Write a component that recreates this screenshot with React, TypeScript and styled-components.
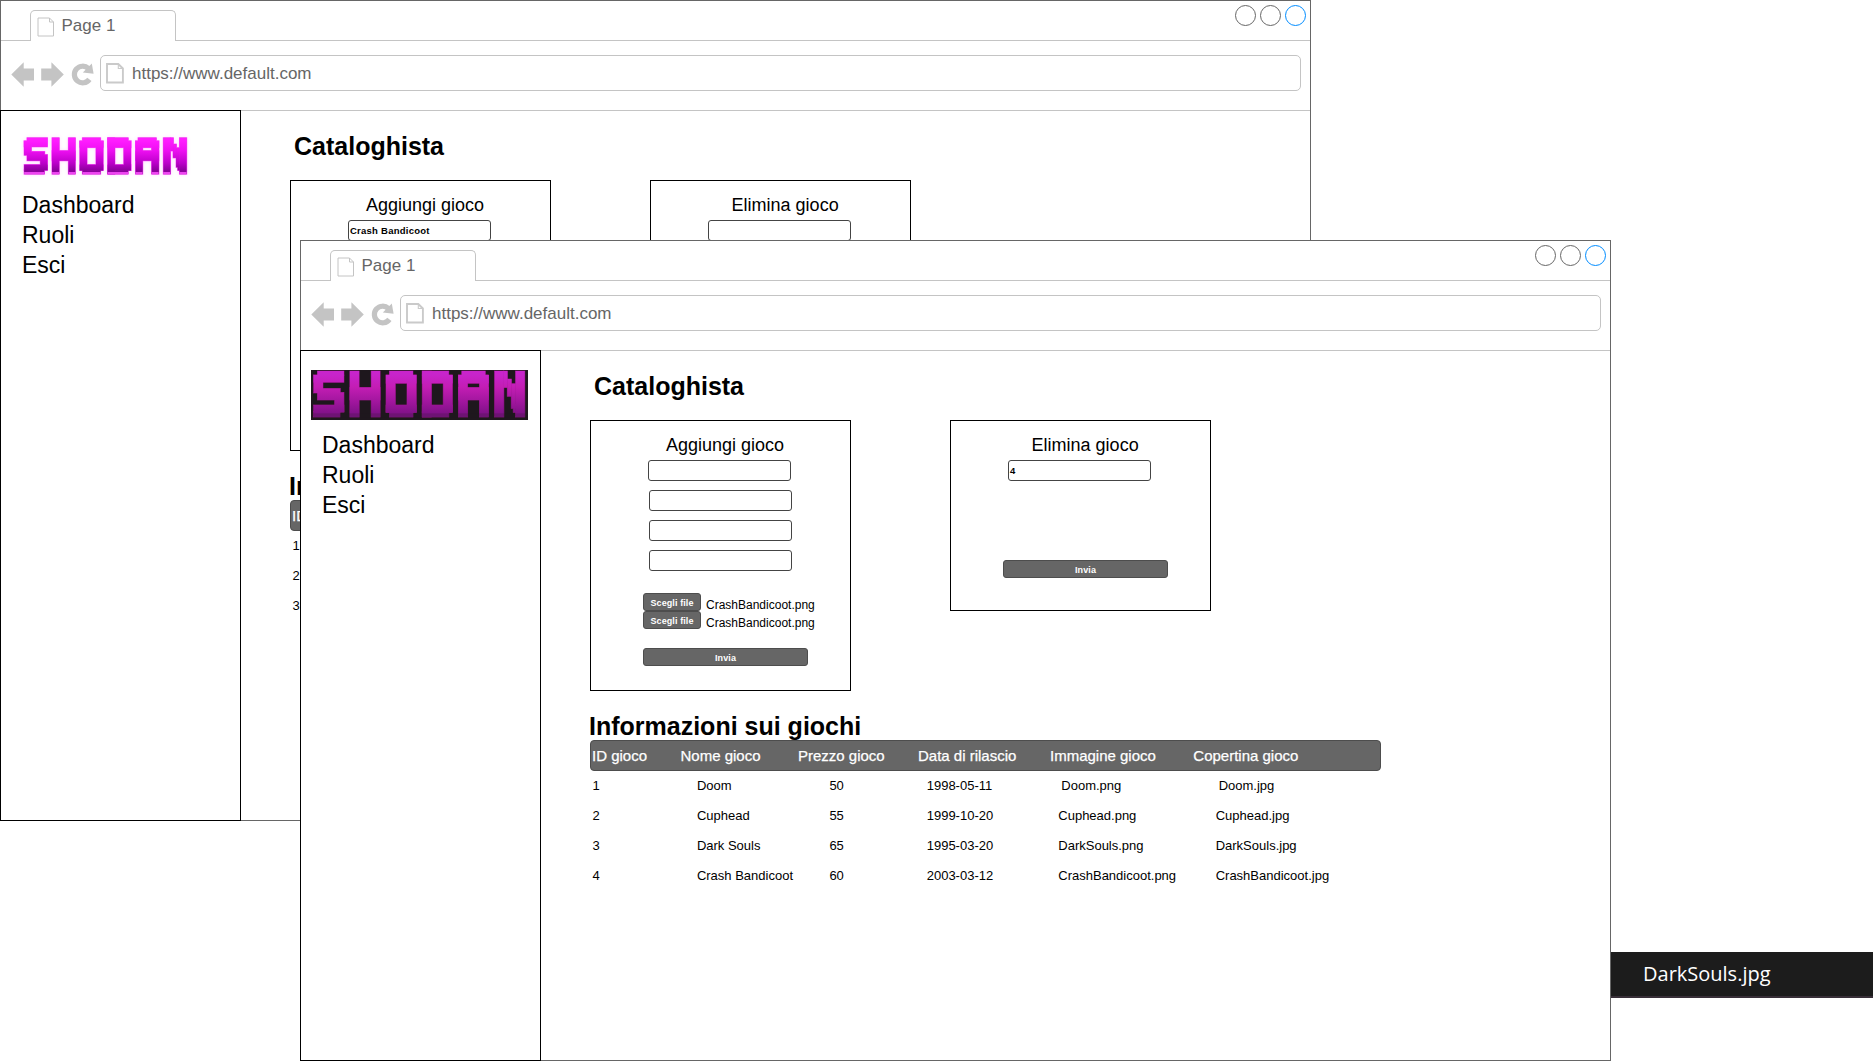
import React from "react";
import styled, { createGlobalStyle } from "styled-components";

const GlobalStyle = createGlobalStyle`
  * { box-sizing: border-box; }
  body {
    margin: 0;
    background: #fff;
    color: #000;
    font-family: "Liberation Sans", Arial, sans-serif;
    overflow: hidden;
  }
`;

const Desktop = styled.div`
  position: relative;
  width: 1873px;
  height: 1061px;
  overflow: hidden;
`;

const WindowFrame = styled.section<{ $x: number; $y: number }>`
  position: absolute;
  left: ${(p) => p.$x}px;
  top: ${(p) => p.$y}px;
  width: 1311px;
  height: 821px;
  display: flex;
  flex-direction: column;
  background: #fff;
  border: 1px solid #666;
`;

const TabBar = styled.div`
  display: flex;
  justify-content: space-between;
  height: 40px;
  padding: 0 4px 0 29px;
  border-bottom: 1px solid #c4c4c4;
`;

const Tab = styled.div`
  display: flex;
  gap: 7px;
  width: 146px;
  height: 31px;
  margin-top: 9px;
  padding: 6px 0 0 6px;
  background: #fff;
  border: 1px solid #c4c4c4;
  border-bottom: 0;
  border-radius: 5px 5px 0 0;
  color: #666;
  font-size: 17px;
  line-height: 18px;
  svg { margin: -0.5px 0 0 -0.5px; }
`;

const WindowDots = styled.div`
  display: flex;
  gap: 4px;
  padding-top: 4px;
`;

const Dot = styled.span<{ $color: string }>`
  width: 21px;
  height: 21px;
  border: 1px solid ${(p) => p.$color};
  border-radius: 50%;
`;

const Toolbar = styled.div`
  display: flex;
  height: 70px;
  padding: 14px 0 0 10px;
  border-bottom: 1px solid #c4c4c4;
`;

const NavIcons = styled.div`
  display: flex;
  gap: 6px;
  width: 89px;
  padding-top: 7px;
`;

const AddressBar = styled.div`
  display: flex;
  align-items: center;
  gap: 8px;
  width: 1201px;
  height: 36px;
  padding-left: 5px;
  border: 1px solid #c4c4c4;
  border-radius: 5px;
  color: #666;
  font-size: 17px;
`;

const Address = styled.span`
  padding-top: 2px;
`;

const Body = styled.div`
  display: flex;
  flex: 1;
`;

const Sidebar = styled.nav`
  width: 241px;
  margin: -1px 0 -1px -1px;
  border: 1px solid #000;
`;

const LogoSlot = styled.div<{ $dark: boolean }>`
  height: 79px;
  padding: ${(p) => (p.$dark ? "19px 0 0 10px" : "20px 0 0 16px")};
  svg { display: block; }
`;

const MenuItem = styled.a`
  display: block;
  padding-left: 21px;
  font-size: 23px;
  line-height: 30px;
`;

const Main = styled.main`
  width: 1060px;
  padding: 20px 0 0 49px;
`;

const PageTitle = styled.h1`
  margin: 0 0 19px 4px;
  font-size: 25px;
  line-height: 30px;
`;

const Panels = styled.div`
  display: flex;
  align-items: flex-start;
  gap: 99px;
`;

const Panel = styled.form<{ $height: number }>`
  width: 261px;
  height: ${(p) => p.$height}px;
  padding-top: 12px;
  border: 1px solid #000;
`;

const PanelTitle = styled.h2<{ $indent: number }>`
  margin: 0 0 3px;
  padding-left: ${(p) => p.$indent}px;
  font-size: 18px;
  font-weight: 400;
  line-height: 24px;
`;

const Fields = styled.div`
  display: flex;
  flex-direction: column;
  gap: 9px;
  padding-left: 57px;
`;

const Field = styled.div<{ $shift?: boolean }>`
  width: 143px;
  height: 21px;
  margin-left: ${(p) => (p.$shift ? 1 : 0)}px;
  padding-left: 1px;
  border: 1px solid #444;
  border-radius: 3px;
  font-size: 9.5px;
  font-weight: 700;
  letter-spacing: 0.25px;
  line-height: 20px;
`;

const Files = styled.div`
  padding: 22px 0 0 52px;
`;

const FileRow = styled.div`
  display: flex;
  gap: 5px;
  height: 18px;
  font-size: 12px;
  line-height: 25px;
`;

const Button = styled.div<{ $width: number }>`
  width: ${(p) => p.$width}px;
  height: 18px;
  background: #666;
  border: 1px solid #4d4d4d;
  border-radius: 3px;
  color: #fff;
  font-size: 9px;
  font-weight: 700;
  letter-spacing: 0.1px;
  line-height: 18px;
  text-align: center;
`;

const Submit = styled.div<{ $top: number }>`
  padding: ${(p) => p.$top}px 0 0 52px;
`;

const TableTitle = styled.h1<{ $top: number }>`
  margin: ${(p) => p.$top}px 0 0 -1px;
  font-size: 25px;
  line-height: 28px;
`;

const TableHead = styled.div`
  display: grid;
  grid-template-columns: 88.5px 117.5px 120px 132px 143.3px 1fr;
  width: 791px;
  height: 31px;
  padding-left: 1px;
  background: #666;
  border: 1px solid #4d4d4d;
  border-radius: 4px;
  color: #fff;
  font-size: 15px;
  line-height: 30px;
  white-space: nowrap;
  -webkit-text-stroke: 0.25px #fff;
`;

const TableRow = styled.div`
  display: grid;
  grid-template-columns: 104.5px 132.5px 97.3px 131.6px 157.4px 1fr;
  width: 791px;
  padding-left: 2.4px;
  font-size: 13px;
  line-height: 30px;
  white-space: nowrap;
`;

const Cell = styled.span<{ $indent?: boolean }>`
  padding-left: ${(p) => (p.$indent ? 3 : 0)}px;
`;

const Strip = styled.div`
  position: absolute;
  left: 1611px;
  top: 952px;
  width: 262px;
  height: 46px;
  padding-left: 32px;
  background: #1c1c1c;
  border-bottom: 2px solid #382f38;
  color: #fff;
  font-family: "Open Sans", sans-serif;
  font-size: 20px;
  line-height: 44px;
`;

const PageIcon = ({ bold }: { bold?: boolean }) => (
  <svg width="18" height="21" viewBox="0 0 18 21" fill="none"
    stroke={bold ? "#cacaca" : "#c4c4c4"} strokeWidth={bold ? 1.9 : 1}>
    <path d={bold ? "M1 1H12.3L16.9 5.5V19.5H1Z" : "M1 1H12.5L16.5 5V19H1Z"} />
    <path d={bold ? "M12.3 .9V5.5H16.9" : "M12.5 1V5H16.5"} strokeWidth={bold ? 1.1 : 1} />
  </svg>
);

const BackIcon = () => (
  <svg width="24" height="26" viewBox="0 0 24 26" fill="#c4c4c4">
    <path d="M.3 12.5L12.7 .3V6.6H23V18.4H12.7V24.8Z" />
  </svg>
);

const ForwardIcon = () => (
  <svg width="24" height="26" viewBox="0 0 24 26" fill="#c4c4c4">
    <path d="M22.8 12.5L10.4 .3V6.6H.2V18.4H10.4V24.8Z" />
  </svg>
);

const ReloadIcon = () => (
  <svg width="24" height="26" viewBox="0 0 24 26">
    <path d="M17.4 6.5A8.3 8.3 0 1 0 18.4 17.4" fill="none" stroke="#c4c4c4" strokeWidth="5.2" />
    <path d="M20.8 1.4L22.6 11.8L11.8 10.4Z" fill="#c4c4c4" />
  </svg>
);

type Block = [number, number, number, number];

// Pixel blocks of the logo, one list per symbol, each on a 91 x 138 field.
const logoBlocks: Block[][] = [
  [[11, 0, 80, 13], [0, 12, 91, 22], [0, 12, 28, 54], [11, 52, 69, 35], [63, 64, 28, 59], [0, 102, 91, 21], [0, 122, 79, 16]],
  [[0, 0, 28, 138], [64, 0, 27, 138], [0, 49, 91, 38]],
  [[10, 0, 71, 13], [0, 12, 28, 112], [63, 12, 28, 112], [0, 12, 91, 25], [0, 102, 91, 22], [10, 123, 71, 15]],
  [[0, 0, 80, 13], [0, 0, 28, 138], [63, 12, 28, 112], [0, 12, 91, 25], [0, 102, 91, 22], [0, 123, 80, 15]],
  [[10, 0, 71, 13], [0, 12, 28, 126], [63, 12, 28, 126], [0, 12, 91, 25], [0, 49, 91, 38]],
  [[0, 0, 28, 138], [63, 0, 28, 138], [27, 0, 12, 50], [38, 24, 13, 52], [50, 38, 14, 74], [56, 100, 8, 24]],
];

const Logo = ({ dark }: { dark: boolean }) => {
  const id = dark ? "logo-dark" : "logo-light";
  const blocks = logoBlocks.flatMap((list, i) =>
    list.map(([x, y, w, h], j) => (
      <rect key={`${i}-${j}`} x={x + i * 108.7} y={y} width={w} height={h} />
    ))
  );
  const stops = dark
    ? ["#c824cb", "#c31db4", "#9d159b", "#83128a"]
    : ["#ff1cff", "#ee0ff2", "#bb00c9", "#8c009c"];
  return (
    <svg
      role="img"
      aria-label="Shodan"
      width={dark ? 217 : 179}
      height={dark ? 50 : 46}
      viewBox={dark ? "-8 -3 652 150" : "-28 -26 699 175"}
      preserveAspectRatio="none"
    >
      <defs>
        <linearGradient id={id} gradientUnits="userSpaceOnUse" x1="0" y1="0" x2="0" y2="138">
          <stop offset="0.08" stopColor={stops[0]} />
          <stop offset="0.35" stopColor={stops[1]} />
          <stop offset="0.7" stopColor={stops[2]} />
          <stop offset="0.9" stopColor={stops[3]} />
        </linearGradient>
        <filter id={`${id}-glow`} x="-10%" y="-30%" width="120%" height="160%">
          <feGaussianBlur stdDeviation="9" />
        </filter>
      </defs>
      {dark && <rect x="-8" y="-3" width="652" height="150" fill="#1e171d" />}
      {!dark && <g fill="#ff60ff" opacity="0.3" filter={`url(#${id}-glow)`}>{blocks}</g>}
      <g stroke={dark ? "#a0168c" : "#ff4cff"} strokeWidth={dark ? 2 : 4}>{blocks}</g>
      <g fill={`url(#${id})`}>{blocks}</g>
      <rect
        x="0" y="127" width="636" height="12"
        fill={dark ? "#1e171d" : "#ff70ff"}
        opacity={dark ? 0.2 : 0}
      />
      {!dark && (
        <g fill="none" stroke="#ff50ff" strokeWidth="8" opacity="0.85">
          {[[0, 79], [109, 27], [174, 26], [228, 70], [326, 80], [435, 27], [498, 27], [543, 27], [606, 28]].map(
            ([x, w]) => <path key={x} d={`M${x} 134h${w}`} />
          )}
        </g>
      )}
    </svg>
  );
};

interface Game {
  id: string;
  name: string;
  price: string;
  date: string;
  image: string;
  cover: string;
  indent?: boolean;
}

const games: Game[] = [
  { id: "1", name: "Doom", price: "50", date: "1998-05-11", image: "Doom.png", cover: "Doom.jpg", indent: true },
  { id: "2", name: "Cuphead", price: "55", date: "1999-10-20", image: "Cuphead.png", cover: "Cuphead.jpg" },
  { id: "3", name: "Dark Souls", price: "65", date: "1995-03-20", image: "DarkSouls.png", cover: "DarkSouls.jpg" },
  { id: "4", name: "Crash Bandicoot", price: "60", date: "2003-03-12", image: "CrashBandicoot.png", cover: "CrashBandicoot.jpg" },
];

const headings = ["ID gioco", "Nome gioco", "Prezzo gioco", "Data di rilascio", "Immagine gioco", "Copertina gioco"];

interface BrowserProps {
  x: number;
  y: number;
  darkLogo: boolean;
  newGame: string;
  removeId: string;
  rows: Game[];
}

const Browser = ({ x, y, darkLogo, newGame, removeId, rows }: BrowserProps) => (
  <WindowFrame $x={x} $y={y}>
    <TabBar>
      <Tab><PageIcon />Page 1</Tab>
      <WindowDots>
        <Dot $color="#666" />
        <Dot $color="#666" />
        <Dot $color="#008cff" />
      </WindowDots>
    </TabBar>
    <Toolbar>
      <NavIcons><BackIcon /><ForwardIcon /><ReloadIcon /></NavIcons>
      <AddressBar><PageIcon bold /><Address>https://www.default.com</Address></AddressBar>
    </Toolbar>
    <Body>
      <Sidebar>
        <LogoSlot $dark={darkLogo}><Logo dark={darkLogo} /></LogoSlot>
        <MenuItem>Dashboard</MenuItem>
        <MenuItem>Ruoli</MenuItem>
        <MenuItem>Esci</MenuItem>
      </Sidebar>
      <Main>
        <PageTitle>Cataloghista</PageTitle>
        <Panels>
          <Panel $height={271}>
            <PanelTitle $indent={75}>Aggiungi gioco</PanelTitle>
            <Fields>
              <Field>{newGame}</Field>
              <Field $shift />
              <Field $shift />
              <Field $shift />
            </Fields>
            <Files>
              <FileRow><Button $width={58}>Scegli file</Button>CrashBandicoot.png</FileRow>
              <FileRow><Button $width={58}>Scegli file</Button>CrashBandicoot.png</FileRow>
            </Files>
            <Submit $top={19}><Button $width={165}>Invia</Button></Submit>
          </Panel>
          <Panel $height={191}>
            <PanelTitle $indent={80.6}>Elimina gioco</PanelTitle>
            <Fields><Field>{removeId}</Field></Fields>
            <Submit $top={79}><Button $width={165}>Invia</Button></Submit>
          </Panel>
        </Panels>
        <TableTitle $top={21}>Informazioni sui giochi</TableTitle>
        <TableHead>{headings.map((h) => <span key={h}>{h}</span>)}</TableHead>
        {rows.map((g) => (
          <TableRow key={g.id}>
            <Cell>{g.id}</Cell>
            <Cell>{g.name}</Cell>
            <Cell>{g.price}</Cell>
            <Cell>{g.date}</Cell>
            <Cell $indent={g.indent}>{g.image}</Cell>
            <Cell $indent={g.indent}>{g.cover}</Cell>
          </TableRow>
        ))}
      </Main>
    </Body>
  </WindowFrame>
);

export default function App() {
  return (
    <Desktop>
      <GlobalStyle />
      <Browser x={0} y={0} darkLogo={false} newGame="Crash Bandicoot" removeId="" rows={games.slice(0, 3)} />
      <Strip>DarkSouls.jpg</Strip>
      <Browser x={300} y={240} darkLogo newGame="" removeId="4" rows={games} />
    </Desktop>
  );
}
